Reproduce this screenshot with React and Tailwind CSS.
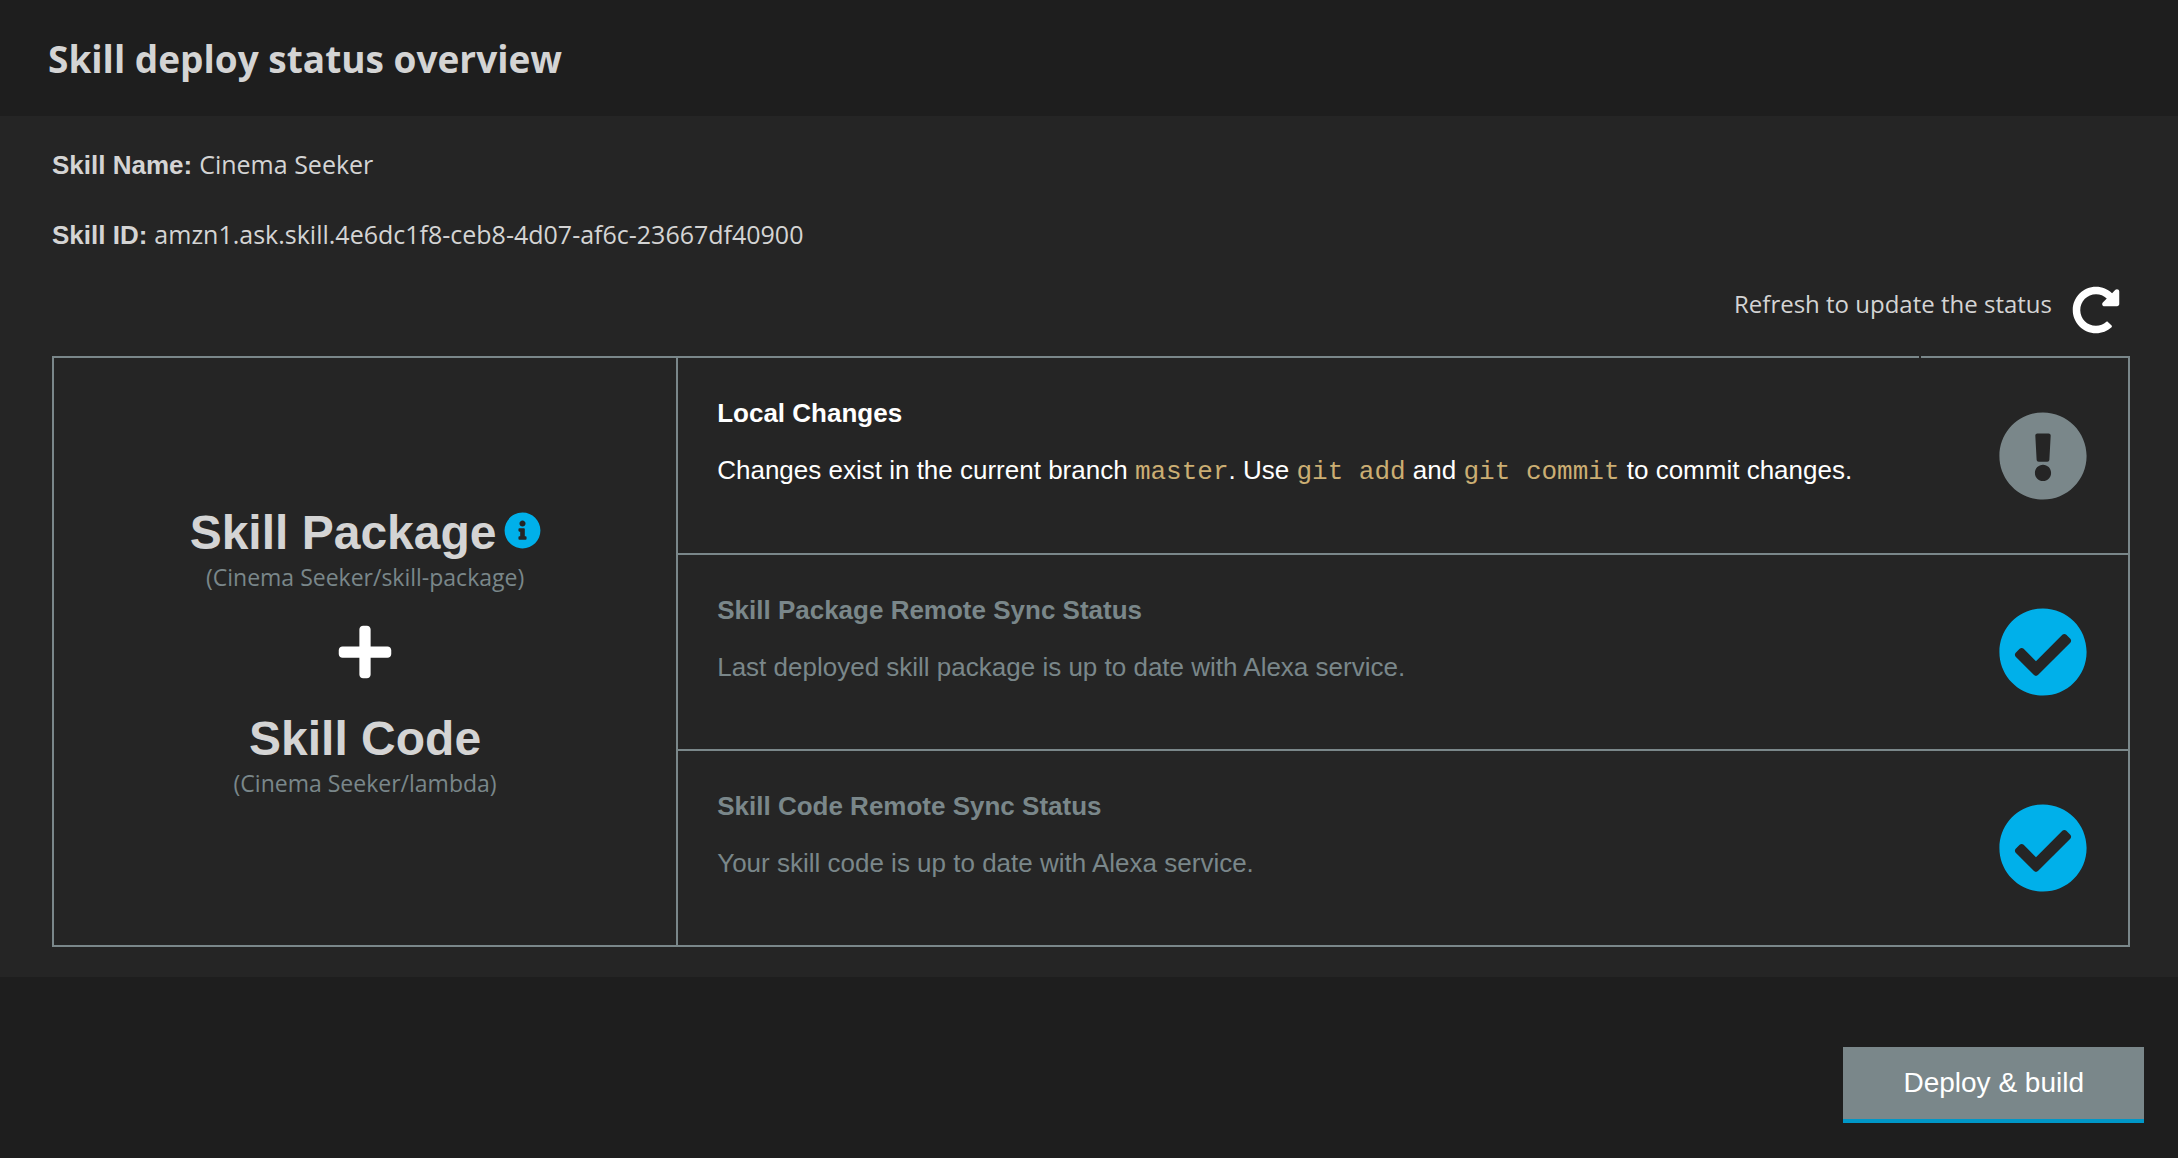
import React from "react";
import {
  FaCheckCircle,
  FaExclamationCircle,
  FaInfoCircle,
  FaPlus,
  FaRedoAlt,
} from "react-icons/fa";

function Code({ children }) {
  return (
    <code className="font-['Liberation_Mono',monospace] text-[26px] leading-none text-[#cbae73]">
      {children}
    </code>
  );
}

function Field({ label, children }) {
  return (
    <div className="flex items-baseline gap-[7px] leading-9">
      <dt className="font-['Liberation_Sans',sans-serif] text-[26px] font-bold">{label}</dt>
      <dd className="text-[25px]">{children}</dd>
    </div>
  );
}

function Part({ title, path, info }) {
  return (
    <div className="flex flex-col items-center">
      <div className="flex items-center gap-[7px]">
        <h2 className="font-['Liberation_Sans',sans-serif] text-[48px] leading-14 font-bold">
          {title}
        </h2>
        {info && (
          <button type="button" aria-label={"About " + title} className="mb-1 text-[#00b0ea]">
            <FaInfoCircle size={37} />
          </button>
        )}
      </div>
      <p className="text-[23px] leading-8 text-[#7a878a]">{path}</p>
    </div>
  );
}

function StatusRow({ title, active, children }) {
  return (
    <li
      className={
        "flex min-h-[196px] items-center justify-between border-b-2 border-[#7a878a] pr-10 pl-[39px] first:min-h-[197px] last:min-h-[194px] last:border-b-0 " +
        (active ? "text-white" : "text-[#7a878a]")
      }
    >
      <div className="flex flex-col gap-[25px] self-start pt-[39px] font-['Liberation_Sans',sans-serif] text-[26px] leading-8">
        <h3 className="font-bold">{title}</h3>
        <p>{children}</p>
      </div>
      {active ? (
        <FaExclamationCircle size={90} className="shrink-0 text-[#7a878a]" />
      ) : (
        <FaCheckCircle size={90} className="shrink-0 text-[#00b0ea]" />
      )}
    </li>
  );
}

export default function App() {
  return (
    <div className="flex min-h-screen flex-col bg-[#1e1e1e] font-['Open_Sans','Noto_Sans',sans-serif] text-[#d4d4d4]">
      <header className="px-12 pt-[33px] pb-[31px]">
        <h1 className="text-[37px] leading-[52px] font-bold">Skill deploy status overview</h1>
      </header>

      <main className="bg-[#252525] pt-[30px] pr-12 pb-[30px] pl-[52px]">
        <dl className="flex flex-col gap-[33px]">
          <Field label="Skill Name:">Cinema Seeker</Field>
          <Field label="Skill ID:">amzn1.ask.skill.4e6dc1f8-ceb8-4d07-af6c-23667df40900</Field>
        </dl>

        <div className="mt-[33px] mb-[22px] flex justify-end gap-5 pr-[10px]">
          <span id="refresh-label" className="text-[24px] leading-9">
            Refresh to update the status
          </span>
          <button type="button" aria-labelledby="refresh-label" className="text-white">
            <FaRedoAlt size={48} />
          </button>
        </div>

        <section className="relative grid grid-cols-[30%_70%] border-2 border-[#7a878a]">
          <span className="absolute -top-[2px] right-[10%] h-[2px] w-[2px] bg-[#252525]" />
          <div className="flex flex-col items-center justify-center">
            <Part title="Skill Package" path="(Cinema Seeker/skill-package)" info />
            <FaPlus size={60} className="my-[29px] text-white" />
            <Part title="Skill Code" path="(Cinema Seeker/lambda)" />
          </div>
          <ul className="border-l-2 border-[#7a878a]">
            <StatusRow title="Local Changes" active>
              Changes exist in the current branch <Code>master</Code>. Use <Code>git add</Code> and{" "}
              <Code>git commit</Code> to commit changes.
            </StatusRow>
            <StatusRow title="Skill Package Remote Sync Status">
              Last deployed skill package is up to date with Alexa service.
            </StatusRow>
            <StatusRow title="Skill Code Remote Sync Status">
              Your skill code is up to date with Alexa service.
            </StatusRow>
          </ul>
        </section>
      </main>

      <footer className="flex justify-end px-[34px] pt-[70px]">
        <button
          type="button"
          className="border-b-4 border-[#0097c7] bg-[#7a878a] px-[60px] py-[18px] font-['Liberation_Sans',sans-serif] text-[28px] leading-9 text-white"
        >
          Deploy &amp; build
        </button>
      </footer>
    </div>
  );
}
